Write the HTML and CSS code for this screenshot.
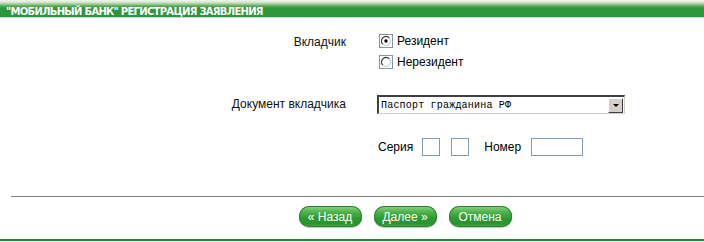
FILE: index.html
```html
<!DOCTYPE html>
<html lang="ru">
<head>
    <meta charset="UTF-8">
    <title>Мобильный банк</title>
    <link rel="stylesheet" href="styles.css">
</head>
<body>
    <div class="title">"МОБИЛЬНЫЙ БАНК" РЕГИСТРАЦИЯ ЗАЯВЛЕНИЯ</div>

    <div class="form">
        <div class="row row-depositor">
            <div class="label">Вкладчик</div>
            <div class="field radios">
                <label class="radio">
                    <span class="radio-box">
                        <svg width="12" height="12" viewBox="0 0 12 12">
                            <circle cx="6" cy="6" r="4.5" fill="#fff" stroke="#c4c4c4" stroke-width="1"/>
                            <path d="M2.8 9.2 A4.5 4.5 0 0 1 9.2 2.8" fill="none" stroke="#333" stroke-width="1.2"/>
                            <circle cx="6" cy="6" r="1.7" fill="#000"/>
                        </svg>
                    </span>
                    Резидент
                </label>
                <label class="radio">
                    <span class="radio-box">
                        <svg width="12" height="12" viewBox="0 0 12 12">
                            <circle cx="6" cy="6" r="4.5" fill="#fff" stroke="#c4c4c4" stroke-width="1"/>
                            <path d="M2.8 9.2 A4.5 4.5 0 0 1 9.2 2.8" fill="none" stroke="#333" stroke-width="1.2"/>
                        </svg>
                    </span>
                    Нерезидент
                </label>
            </div>
        </div>

        <div class="row row-document">
            <div class="label">Документ вкладчика</div>
            <div class="field">
                <div class="select">
                    <span class="select-text">Паспорт гражданина РФ</span>
                    <span class="select-arrow"><span class="tri"></span></span>
                </div>
            </div>
        </div>

        <div class="row row-number">
            <div class="label"></div>
            <div class="field passport">
                <span class="caption">Серия</span>
                <span class="box small"></span>
                <span class="box small second"></span>
                <span class="caption number">Номер</span>
                <span class="box wide"></span>
            </div>
        </div>
    </div>

    <div class="sep"></div>

    <div class="actions">
        <button class="btn">« Назад</button>
        <button class="btn">Далее »</button>
        <button class="btn">Отмена</button>
    </div>

    <div class="bottom-line"></div>
</body>
</html>
```

FILE: styles.css
```css
body {
    margin: 0;
    font-family: "Liberation Sans", Arial, sans-serif;
    font-size: 12px;
    color: #000;
    background: #fff;
    width: 704px;
}
.title {
    height: 18px;
    padding-left: 6px;
    box-sizing: border-box;
    padding-top: 6px;
    font-family: "DejaVu Sans", Tahoma, sans-serif;
    font-weight: bold;
    font-size: 10px;
    line-height: 11px;
    color: #fff;
    background: linear-gradient(#f0f4ea 0, #dde9d4 2px, #a3cd98 4px, #5aab59 6px, #2e963a 8px, #2e963a 100%);
    border-bottom: 1px solid #d0d0d0;
    letter-spacing: -0.7px;
}
.form {
    padding-top: 16px;
}
.row {
    display: grid;
    grid-template-columns: 346px 1fr;
    column-gap: 31px;
}
.label {
    text-align: right;
    color: #111;
}
.row-depositor .label {
    padding-top: 1px;
}
.radios {
    display: flex;
    flex-direction: column;
    gap: 7px;
    margin-left: 2px;
}
.radio {
    display: flex;
    align-items: center;
    gap: 4px;
    height: 14px;
}
.radio-box {
    width: 14px;
    height: 14px;
    box-sizing: border-box;
    border: 1px solid #8296aa;
    display: flex;
    align-items: center;
    justify-content: center;
}
.radio-box svg {
    display: block;
}
.row-document {
    margin-top: 26px;
}
.row-document .label {
    padding-top: 2px;
}
.select {
    width: 248px;
    height: 19px;
    box-sizing: border-box;
    border-top: 2px solid #404040;
    border-left: 2px solid #404040;
    border-right: 1px solid #d4d0c8;
    border-bottom: 1px solid #d4d0c8;
    display: flex;
    align-items: center;
    background: #fff;
}
.select-text {
    flex: 1;
    font-family: "Liberation Mono", "Courier New", monospace;
    font-size: 10px;
    letter-spacing: 0.2px;
    padding-left: 2px;
    padding-top: 1px;
}
.select-arrow {
    width: 15px;
    height: 15px;
    box-sizing: border-box;
    background: #d4d0c8;
    border-top: 1px solid #fff;
    border-left: 1px solid #fff;
    border-right: 1px solid #404040;
    border-bottom: 1px solid #404040;
    display: flex;
    align-items: center;
    justify-content: center;
    margin-right: 1px;
}
.tri {
    width: 0;
    height: 0;
    border-left: 3px solid transparent;
    border-right: 3px solid transparent;
    border-top: 3px solid #000;
}
.row-number {
    margin-top: 24px;
}
.passport {
    display: flex;
    align-items: center;
    padding-left: 1px;
}
.box {
    height: 18px;
    box-sizing: border-box;
    border: 1px solid #7f9db9;
    background: #fff;
}
.box.small {
    width: 18px;
    margin-left: 9px;
}
.box.second {
    margin-left: 11px;
}
.caption.number {
    margin-left: 15px;
}
.box.wide {
    width: 52px;
    margin-left: 10px;
}
.sep {
    margin: 40px 0 0 11px;
    height: 1px;
    background: #808080;
}
.actions {
    display: flex;
    justify-content: center;
    gap: 12px;
    padding-left: 106px;
    margin-top: 9px;
}
.btn {
    width: 63px;
    height: 21px;
    border: none;
    border-radius: 10px;
    padding: 0;
    font-family: "Liberation Sans", Arial, sans-serif;
    font-size: 12px;
    color: #fff;
    background: linear-gradient(#8fd486 0, #4cb24b 30%, #2d9831 60%, #2a9530 85%, #4aa94a 100%);
    box-shadow: inset 0 0 0 1px #2a862d, 0 1px 1px rgba(0,0,0,0.25);
    cursor: pointer;
}
.bottom-line {
    margin-top: 12px;
    height: 2px;
    background: #1f8a2c;
}
```
